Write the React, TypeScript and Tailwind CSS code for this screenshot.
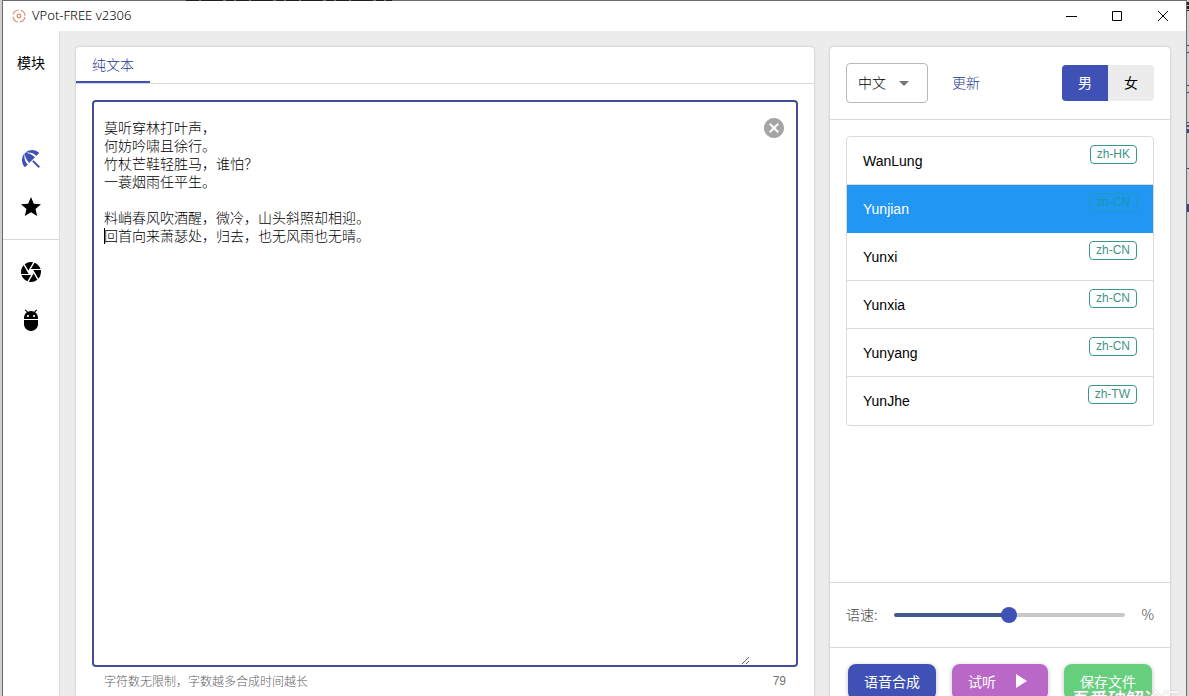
import { useState } from "react";
import { MdAdb, MdArrowDropDown, MdBeachAccess, MdCamera, MdCancel, MdPlayArrow, MdStar } from "react-icons/md";

const POEM = `莫听穿林打叶声，
何妨吟啸且徐行。
竹杖芒鞋轻胜马，谁怕？
一蓑烟雨任平生。

料峭春风吹酒醒，微冷，山头斜照却相迎。
回首向来萧瑟处，归去，也无风雨也无晴。`;

const VOICES = [
  { name: "WanLung", locale: "zh-HK" },
  { name: "Yunjian", locale: "zh-CN" },
  { name: "Yunxi", locale: "zh-CN" },
  { name: "Yunxia", locale: "zh-CN" },
  { name: "Yunyang", locale: "zh-CN" },
  { name: "YunJhe", locale: "zh-TW" },
];

function Logo() {
  return (
    <svg viewBox="0 0 16 16" className="size-4" fill="none" stroke="#d98c74" aria-hidden="true">
      <circle cx="8" cy="8" r="1.8" strokeWidth="1.3" />
      <circle cx="8" cy="8" r="6" strokeWidth="1.2" strokeDasharray="7 2.42" strokeDashoffset="-1.2" />
    </svg>
  );
}

function TitleBar() {
  return (
    <header className="flex h-[30px] shrink-0 items-center bg-white pb-px pl-2">
      <Logo />
      <h1 className="ml-[5px] flex-1 font-['Noto_Sans',sans-serif] text-[13px] font-light text-black">VPot-FREE v2306</h1>
      <button aria-label="Minimize" className="flex h-full w-[46px] items-center justify-center">
        <svg viewBox="0 0 12 12" className="size-3" stroke="#000"><path d="M1 6.5h11" /></svg>
      </button>
      <button aria-label="Maximize" className="flex h-full w-[46px] items-center justify-center">
        <svg viewBox="0 0 12 12" className="size-3" stroke="#000" fill="none"><path d="M1.5 1.5h9v9h-9z" /></svg>
      </button>
      <button aria-label="Close" className="flex h-full w-[46px] items-center justify-center">
        <svg viewBox="0 0 12 12" className="size-3" stroke="#000"><path d="M1 1l10 10M11 1L1 11" /></svg>
      </button>
    </header>
  );
}

function Sidebar() {
  const item = "flex h-12 w-full items-center justify-center";
  return (
    <nav className="flex w-[57px] shrink-0 flex-col border-r border-[#dcdcdc] bg-white text-2xl text-black">
      <h2 className="flex h-16 items-center justify-center pb-0.5 text-sm font-normal">模块</h2>
      <div className="border-b border-[#d8d8d8] pt-10 pb-2">
        <button aria-label="Beach" className={`${item} text-[#3f51b5]`}><MdBeachAccess /></button>
        <button aria-label="Favorites" className={item}><MdStar /></button>
      </div>
      <div className="pt-2">
        <button aria-label="Camera" className={item}><MdCamera /></button>
        <button aria-label="Android" className={item}><MdAdb /></button>
      </div>
    </nav>
  );
}

function Editor() {
  const [text, setText] = useState(POEM);
  return (
    <section className="flex min-w-0 flex-1 flex-col rounded-t bg-white shadow-[0_0_3px_rgba(0,0,0,0.2)]">
      <div className="flex h-[37px] shrink-0 border-b border-[#d8d8d8]">
        <button className="h-9 border-b-2 border-[#3f51b5] px-4 text-sm text-[#26378f]">纯文本</button>
      </div>
      <div className="flex min-h-0 flex-1 flex-col px-4 pt-4">
        <div className="relative flex min-h-0 flex-1 items-start rounded border-2 border-[#434f94] pl-2.5">
          <textarea
            aria-label="纯文本"
            value={text}
            onChange={(e) => setText(e.target.value)}
            spellCheck={false}
            className="h-full min-w-0 flex-1 resize-y pt-4 text-sm leading-[18px] text-black outline-none"
          />
          <span aria-hidden="true" className="absolute top-[126px] left-2.5 h-4 w-px bg-black" />
          <button aria-label="清除" className="mt-3.5 mr-2.5 ml-3 text-2xl text-[#a5a5a5]" onClick={() => setText("")}>
            <MdCancel />
          </button>
        </div>
        <div className="flex h-[29px] shrink-0 justify-between px-3 pt-1.5 text-xs text-[#606060]">
          <p>字符数无限制，字数越多合成时间越长</p>
          <p className="font-['Liberation_Sans',sans-serif] text-[#757575]">79</p>
        </div>
      </div>
    </section>
  );
}

function VoicePanel() {
  const [voice, setVoice] = useState("Yunjian");
  const [rate, setRate] = useState(50);
  const action = "flex h-9 items-center rounded-lg px-4 pb-0.5 text-sm font-normal text-white shadow-[0_1px_4px_rgba(0,0,0,0.25)]";
  return (
    <section className="relative flex w-[340px] shrink-0 flex-col rounded-t bg-white shadow-[0_0_3px_rgba(0,0,0,0.2)]">
      <div className="flex h-[73px] shrink-0 items-center border-b border-[#d8d8d8] px-4 text-sm">
        <div className="relative">
          <select aria-label="语言" className="h-10 w-[82px] appearance-none rounded border border-[#b8b8b8] pb-0.5 pl-[11px] text-black">
            <option>中文</option>
          </select>
          <MdArrowDropDown className="pointer-events-none absolute top-2 right-3 text-2xl text-[#757575]" />
        </div>
        <button className="ml-6 pb-0.5 text-[#26378f]">更新</button>
        <div className="ml-auto flex overflow-hidden rounded font-normal">
          <button className="h-9 w-[46px] bg-[#3f51b5] pb-0.5 text-white">男</button>
          <button className="h-9 w-[46px] bg-[#ececec] pb-0.5 text-black">女</button>
        </div>
      </div>
      <div className="min-h-0 flex-1 overflow-hidden p-4">
        <ul className="rounded border border-[#dadada] font-['Liberation_Sans',sans-serif]">
          {VOICES.map((v) => {
            const active = v.name === voice;
            return (
              <li key={v.name} className="group">
                <button
                  onClick={() => setVoice(v.name)}
                  className={`flex h-12 w-full items-start justify-between border-b px-4 text-sm group-last:border-b-0 ${active ? "border-[#2196f3] bg-[#2196f3] text-white" : "border-[#dadada] text-black"}`}
                >
                  <span className="leading-12">{v.name}</span>
                  <span
                    className={`mt-2 rounded border px-1.5 text-xs leading-[17px] ${active ? "border-[#1a9dc0] text-[#0f9ca6]" : "border-[#3d9588] text-[#3d9588]"}`}
                  >
                    {v.locale}
                  </span>
                </button>
              </li>
            );
          })}
        </ul>
      </div>
      <div className="flex h-[65px] shrink-0 items-center border-t border-[#d8d8d8] px-4 text-sm text-[#444]">
        <label htmlFor="rate" className="pb-0.5">语速:</label>
        <input
          id="rate"
          type="range"
          value={rate}
          onChange={(e) => setRate(Number(e.target.value))}
          style={{ backgroundImage: `linear-gradient(to right, #42568f ${rate}%, #c8c8c8 ${rate}%)` }}
          className="mx-4 h-1 min-w-0 flex-1 appearance-none rounded-full [&::-webkit-slider-thumb]:size-4 [&::-webkit-slider-thumb]:appearance-none [&::-webkit-slider-thumb]:rounded-full [&::-webkit-slider-thumb]:bg-[#3f51b5]"
        />
        <span className="pb-0.5">%</span>
      </div>
      <div className="flex h-[49px] shrink-0 items-start justify-center gap-4 overflow-hidden border-t border-[#d8d8d8] pt-4">
        <button className={`${action} bg-[#3f51b5]`}>语音合成</button>
        <button className={`${action} gap-3 bg-[#ba68c8]`}>
          试听
          <MdPlayArrow className="text-2xl" />
        </button>
        <button className={`${action} bg-[#66cf7e]`}>保存文件</button>
      </div>
      <p className="pointer-events-none absolute -right-2.5 -bottom-3 text-lg leading-5 font-medium text-white [text-shadow:0_0_2px_#bbb]">
        吾爱破解论坛
      </p>
    </section>
  );
}

/* Slivers of the windows that lie behind this one. */
function Behind() {
  return (
    <>
      <svg aria-hidden="true" className="absolute top-0 right-0 h-60 w-0.5" viewBox="0 0 2 240" stroke="#3b4a8c" strokeWidth="2">
        <path d="M1 2v9" stroke="#222" strokeDasharray="3 1" />
        <path d="M1 45v1M1 52v1M1 85v1M1 92v1M1 122v1M1 125v2M1 129v4M1 168v1M1 204v8" />
      </svg>
      <svg aria-hidden="true" className="absolute top-0 left-46 h-px w-52" viewBox="0 0 208 1" stroke="#1f1f1f">
        <path d="M2 .5h206" strokeDasharray="13 2 22 3 8 2" />
      </svg>
    </>
  );
}

export default function App() {
  return (
    <div className="relative flex h-screen overflow-hidden bg-[#cfcfcf] px-0.5 font-['Noto_Sans_CJK_SC',sans-serif] font-light">
      <div className="flex min-w-0 flex-1 flex-col border-x border-t border-[#6b6b6b] bg-[#ececec]">
        <TitleBar />
        <main className="flex min-h-0 flex-1">
          <Sidebar />
          <div className="flex min-w-0 flex-1 gap-4 px-4 pt-4">
            <Editor />
            <VoicePanel />
          </div>
        </main>
      </div>
      <Behind />
    </div>
  );
}
